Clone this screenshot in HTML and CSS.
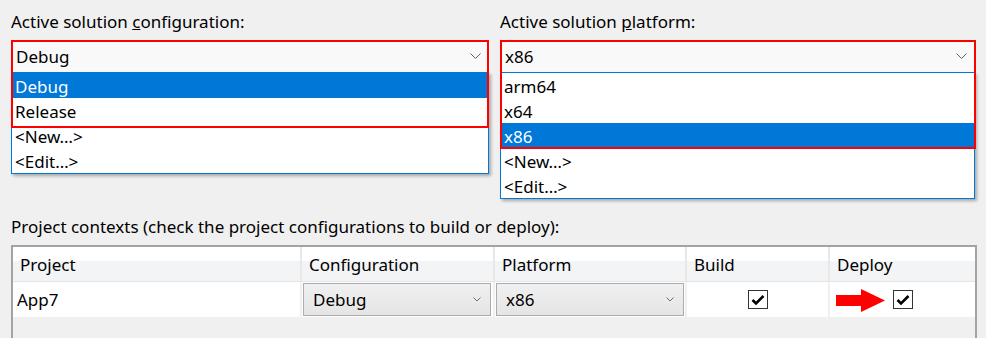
FILE: index.html
```html
<!DOCTYPE html>
<html lang="en">
<head>
    <meta charset="UTF-8">
    <title>Configuration Manager</title>
    <link rel="stylesheet" href="styles.css">
</head>
<body>
    <div class="solution-row">
        <div class="field">
            <div class="field-label">Active solution <u>c</u>onfiguration:</div>
            <div class="combo">
                <div class="combo-head">
                    <span>Debug</span>
                    <svg class="chevron" width="11" height="6" viewBox="0 0 11 6"><path d="M0.5 0.5 L5.5 5.5 L10.5 0.5" fill="none" stroke="#606060" stroke-width="1"/></svg>
                </div>
                <ul class="combo-list">
                    <li class="selected">Debug</li>
                    <li>Release</li>
                    <li>&lt;New…&gt;</li>
                    <li>&lt;Edit…&gt;</li>
                </ul>
                <div class="mark mark-config"></div>
            </div>
        </div>
        <div class="field">
            <div class="field-label">Active solution <u>p</u>latform:</div>
            <div class="combo">
                <div class="combo-head">
                    <span>x86</span>
                    <svg class="chevron" width="11" height="6" viewBox="0 0 11 6"><path d="M0.5 0.5 L5.5 5.5 L10.5 0.5" fill="none" stroke="#606060" stroke-width="1"/></svg>
                </div>
                <ul class="combo-list">
                    <li>arm64</li>
                    <li>x64</li>
                    <li class="selected">x86</li>
                    <li>&lt;New…&gt;</li>
                    <li>&lt;Edit…&gt;</li>
                </ul>
                <div class="mark mark-platform"></div>
            </div>
        </div>
    </div>

    <div class="contexts-label">Project contexts (check the project configurations to build or deploy):</div>

    <div class="grid">
        <div class="grid-head">
            <div class="head-cell">Project</div>
            <div class="head-cell">Configuration</div>
            <div class="head-cell">Platform</div>
            <div class="head-cell">Build</div>
            <div class="head-cell">Deploy</div>
        </div>
        <div class="grid-row">
            <div class="cell">App7</div>
            <div class="cell">
                <div class="cell-combo">
                    <span>Debug</span>
                    <svg width="8" height="5" viewBox="0 0 8 5"><path d="M0.5 0.5 L4 4 L7.5 0.5" fill="none" stroke="#707070" stroke-width="1"/></svg>
                </div>
            </div>
            <div class="cell">
                <div class="cell-combo">
                    <span>x86</span>
                    <svg width="8" height="5" viewBox="0 0 8 5"><path d="M0.5 0.5 L4 4 L7.5 0.5" fill="none" stroke="#707070" stroke-width="1"/></svg>
                </div>
            </div>
            <div class="cell center">
                <span class="check">
                    <svg width="18" height="18" viewBox="0 0 18 18"><path d="M3.5 9 L7 12.5 L14.5 5" fill="none" stroke="#000" stroke-width="2.6"/></svg>
                </span>
            </div>
            <div class="cell center">
                <svg class="arrow" width="49" height="23" viewBox="0 0 49 23"><polygon points="0,6 25,6 25,0 49,11.5 25,23 25,17 0,17" fill="#f00"/></svg>
                <span class="check">
                    <svg width="18" height="18" viewBox="0 0 18 18"><path d="M3.5 9 L7 12.5 L14.5 5" fill="none" stroke="#000" stroke-width="2.6"/></svg>
                </span>
            </div>
        </div>
    </div>
</body>
</html>
```

FILE: styles.css
```css
body {
    margin: 0;
    background-color: #f0f0f0;
    font-family: "Noto Sans", "Open Sans", sans-serif;
    font-size: 17px;
    color: #000;
}
.solution-row {
    display: grid;
    grid-template-columns: 479px 476px;
    column-gap: 10px;
    padding: 11px 0 0 11px;
    height: 205px;
}
.field-label {
    line-height: 22px;
    margin-bottom: 7px;
}
.combo {
    position: relative;
}
.combo-head {
    height: 32px;
    box-sizing: border-box;
    background-color: #f9f9f9;
    display: flex;
    align-items: center;
    justify-content: space-between;
    padding: 0 9px 0 5px;
}
.combo-list {
    position: absolute;
    top: 32px;
    left: 0;
    right: 1px;
    margin: 0;
    padding: 0;
    list-style: none;
    background: white;
    border: 1px solid #0078d7;
    box-shadow: 2px 2px 3px rgba(0,0,0,0.3);
    z-index: 2;
}
.combo-list li {
    height: 25px;
    line-height: 27px;
    padding-left: 3px;
}
.combo-list li.selected {
    background-color: #0078d7;
    color: white;
}
.mark {
    position: absolute;
    top: 0;
    left: 0;
    right: 0;
    border: 2px solid #f00;
    z-index: 3;
}
.mark-config {
    height: 84px;
    right: 1px;
}
.mark-platform {
    height: 105px;
}
.contexts-label {
    padding-left: 11px;
    line-height: 22px;
    margin-bottom: 7px;
}
.grid {
    margin-left: 11px;
    width: 966px;
    height: 93px;
    box-sizing: border-box;
    border: 2px solid #a3a3a3;
    border-bottom: none;
    background-color: #f0f0f0;
}
.grid-head, .grid-row {
    display: grid;
    grid-template-columns: 289px 193px 192px 143px 145px;
}
.head-cell {
    height: 34px;
    line-height: 36px;
    padding-left: 7px;
    background: linear-gradient(#ffffff 0, #ffffff 40%, #f3f4f6 42%, #f3f4f6 100%);
    border-right: 2px solid #e8e8e8;
    border-bottom: 1px solid #e5e5e5;
}
.head-cell:last-child {
    border-right: none;
}
.cell {
    height: 35px;
    background: white;
    border-right: 2px solid #f0f0f0;
    display: flex;
    align-items: center;
    padding-left: 4px;
    position: relative;
}
.cell:last-child {
    border-right: none;
}
.cell.center {
    justify-content: center;
    padding-left: 0;
}
.cell-combo {
    box-sizing: border-box;
    width: 188px;
    height: 33px;
    margin-left: -3px;
    border: 1px solid #acacac;
    background: linear-gradient(#f0f0f0, #e5e5e5);
    display: flex;
    align-items: center;
    justify-content: space-between;
    padding: 0 9px 0 9px;
}
.check {
    width: 20px;
    height: 19px;
    box-sizing: border-box;
    border: 1px solid #333;
    background: white;
    display: flex;
    align-items: center;
    justify-content: center;
}
.arrow {
    position: absolute;
    left: 6px;
    top: 7px;
}
```
